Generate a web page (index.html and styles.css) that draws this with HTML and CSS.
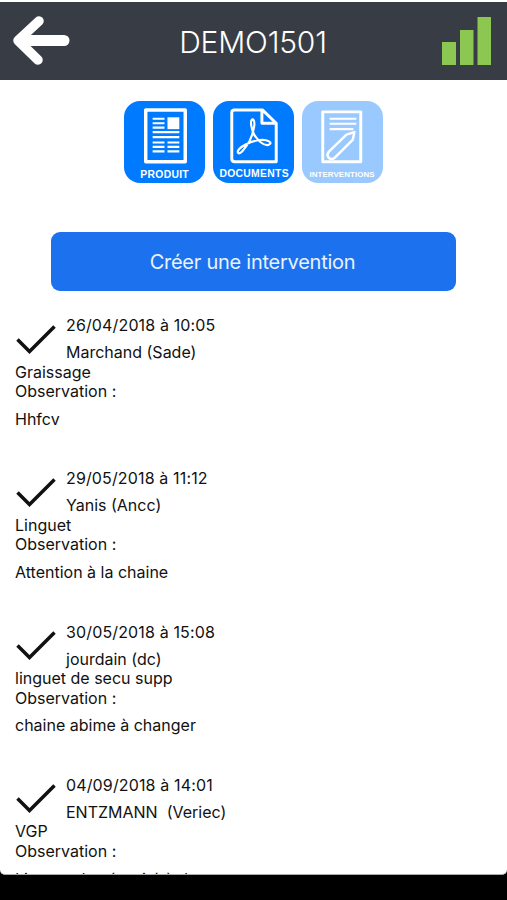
FILE: index.html
```html
<!DOCTYPE html>
<html lang="fr">

<head>
    <meta charset="utf-8">
    <meta name="viewport" content="width=device-width, initial-scale=1.0">
    <title>DEMO1501</title>
    <link rel="stylesheet" href="styles.css">
</head>

<body>
    <div class="screen">
        <header class="topbar">
            <svg class="back" viewBox="0 0 58 52">
                <path d="M27 6 L6 25.5 L26 45" />
                <path class="shaft" d="M10 25.500 H52" />
            </svg>
            <h1 class="title">DEMO1501</h1>
            <svg class="signal" viewBox="0 0 50 50">
                <rect x="0" y="26" width="14" height="23" />
                <rect x="18" y="14" width="13.500" height="35" />
                <rect x="35.500" y="1" width="13.500" height="48" />
            </svg>
        </header>

        <nav class="tabs">
            <a class="tab">
                <svg viewBox="0 0 82 82">
                    <rect class="line" x="22" y="8.500" width="40" height="52.500" stroke-width="3.500" />
                    <rect class="solid" x="44" y="16" width="12" height="12" />
                    <path class="line" stroke-width="2.200" d="M29 17.500h12M29 22h12M29 26.500h12M29 31h27M29 36h27M29 41.500h12M44 41.500h12M29 46h12M44 46h12M29 50.500h12M44 50.500h12" />
                    <text x="41" y="77" font-size="10.500" textLength="49">PRODUIT</text>
                </svg>
            </a>
            <a class="tab">
                <svg viewBox="0 0 82 82">
                    <path class="line" stroke-width="3" d="M20 8.500 H50 L64 22 V61 H22 Q19 61 19 58 V11 Q19 8.500 22 8.500 M49.500 8.500 V22 H64" />
                    <path class="line" stroke-width="2.200" d="M40 18 C37 19 39 29 42 34 C45 39 51 45 56 44 C62 42 55 38 47 39 C38 40 26 46 25 51 C26 56 33 47 37 40 C41 32 44 19 40 18 Z" />
                    <text x="41.500" y="76" font-size="10.500" textLength="70">DOCUMENTS</text>
                </svg>
            </a>
            <a class="tab tab-off">
                <svg viewBox="0 0 82 82">
                    <rect class="line" x="21" y="10.500" width="38.500" height="50.500" stroke-width="3" />
                    <path class="line" stroke-width="2.200" d="M28 17.500h27M28 22.500h27M28 28h24" />
                    <path class="line" stroke-width="2.500" d="M53 31 L51.500 38.500 L33 57 Q30 59.500 27 57 Q24.500 54 27 51 L45 33.500 Z" />
                    <text x="40.500" y="76" font-size="8" textLength="66">INTERVENTIONS</text>
                </svg>
            </a>
        </nav>

        <button class="create">Créer une intervention</button>

        <ul class="list">
            <li class="item">
                <div class="head">
                    <svg class="check" viewBox="0 0 40 30"><path d="M1.500 14.500 L13.500 26.500 L38.500 1.500" /></svg>
                    <div class="who">
                        <p class="date">26/04/2018 à 10:05</p>
                        <p>Marchand (Sade)</p>
                    </div>
                </div>
                <p>Graissage</p>
                <p>Observation :</p>
                <p class="note">Hhfcv</p>
            </li>
            <li class="item">
                <div class="head">
                    <svg class="check" viewBox="0 0 40 30"><path d="M1.500 14.500 L13.500 26.500 L38.500 1.500" /></svg>
                    <div class="who">
                        <p class="date">29/05/2018 à 11:12</p>
                        <p>Yanis (Ancc)</p>
                    </div>
                </div>
                <p>Linguet</p>
                <p>Observation :</p>
                <p class="note">Attention à la chaine</p>
            </li>
            <li class="item">
                <div class="head">
                    <svg class="check" viewBox="0 0 40 30"><path d="M1.500 14.500 L13.500 26.500 L38.500 1.500" /></svg>
                    <div class="who">
                        <p class="date">30/05/2018 à 15:08</p>
                        <p>jourdain (dc)</p>
                    </div>
                </div>
                <p>linguet de secu supp</p>
                <p>Observation :</p>
                <p class="note">chaine abime à changer</p>
            </li>
            <li class="item">
                <div class="head">
                    <svg class="check" viewBox="0 0 40 30"><path d="M1.500 14.500 L13.500 26.500 L38.500 1.500" /></svg>
                    <div class="who">
                        <p class="date">04/09/2018 à 14:01</p>
                        <p>ENTZMANN&nbsp; (Veriec)</p>
                    </div>
                </div>
                <p>VGP</p>
                <p>Observation :</p>
                <p class="note">Linguet de sécurité à de</p>
            </li>
        </ul>
    </div>
</body>

</html>
```
FILE: styles.css
```css
* {
    box-sizing: border-box;
}

body {
    margin: 0;
    height: 900px;
    overflow: hidden;
    background-color: #000;
    font-family: Inter, "Liberation Sans", sans-serif;
    color: #111;
}

p {
    margin: 0;
}

.screen {
    height: 875px;
    overflow: hidden;
    padding-top: 2px;
    background-color: #fff;
    border-bottom: 1px solid #aaa;
    border-radius: 0 0 5px 5px;
}

.topbar {
    display: flex;
    justify-content: space-between;
    align-items: center;
    height: 78px;
    padding: 0 15px 0 12px;
    background-color: #383c45;
}

.back {
    width: 58px;
    height: 52px;
}

.back path {
    fill: none;
    stroke: #fff;
    stroke-width: 9.5;
    stroke-linecap: round;
    stroke-linejoin: round;
}

.back .shaft {
    stroke-width: 11;
}

.title {
    margin: 0 6px 0 0;
    padding-top: 2px;
    font-size: 30px;
    font-weight: 300;
    letter-spacing: -0.2px;
    color: #fff;
}

.signal {
    width: 50px;
    height: 50px;
    fill: #8bc751;
}

.tabs {
    display: flex;
    justify-content: center;
    gap: 8px;
    padding-top: 21px;
}

.tab {
    width: 81px;
    height: 82px;
    border-radius: 16px;
    background-color: #007aff;
}

.tab-off {
    background-color: #99c9ff;
}

.tab svg {
    display: block;
    width: 100%;
    height: 100%;
}

.tab .line {
    fill: none;
    stroke: #fff;
    stroke-linejoin: round;
}

.tab .solid {
    fill: #fff;
}

.tab text {
    fill: #fff;
    font-family: "Liberation Sans", sans-serif;
    font-weight: bold;
    text-anchor: middle;
}

.create {
    display: block;
    width: 405px;
    height: 59px;
    margin: 49px 0 0 51px;
    padding: 0 2px 0 0;
    border: none;
    border-radius: 9px;
    background-color: #1c72ee;
    color: #e9f3ff;
    font-family: inherit;
    font-size: 20px;
    letter-spacing: -0.25px;
}

.list {
    margin: 0;
    padding: 25px 15px 0;
    list-style: none;
    font-size: 16px;
    line-height: 19.5px;
}

.item {
    height: 153.3px;
}

.head {
    display: flex;
    gap: 10px;
    height: 46.5px;
}

.check {
    width: 40px;
    height: 30px;
    margin: 8.5px 0 0 1px;
    fill: none;
    stroke: #111;
    stroke-width: 3.5;
}

.who .date {
    margin-bottom: 7.7px;
    letter-spacing: 0.14px;
}

.note {
    margin-top: 8.3px;
}
```
